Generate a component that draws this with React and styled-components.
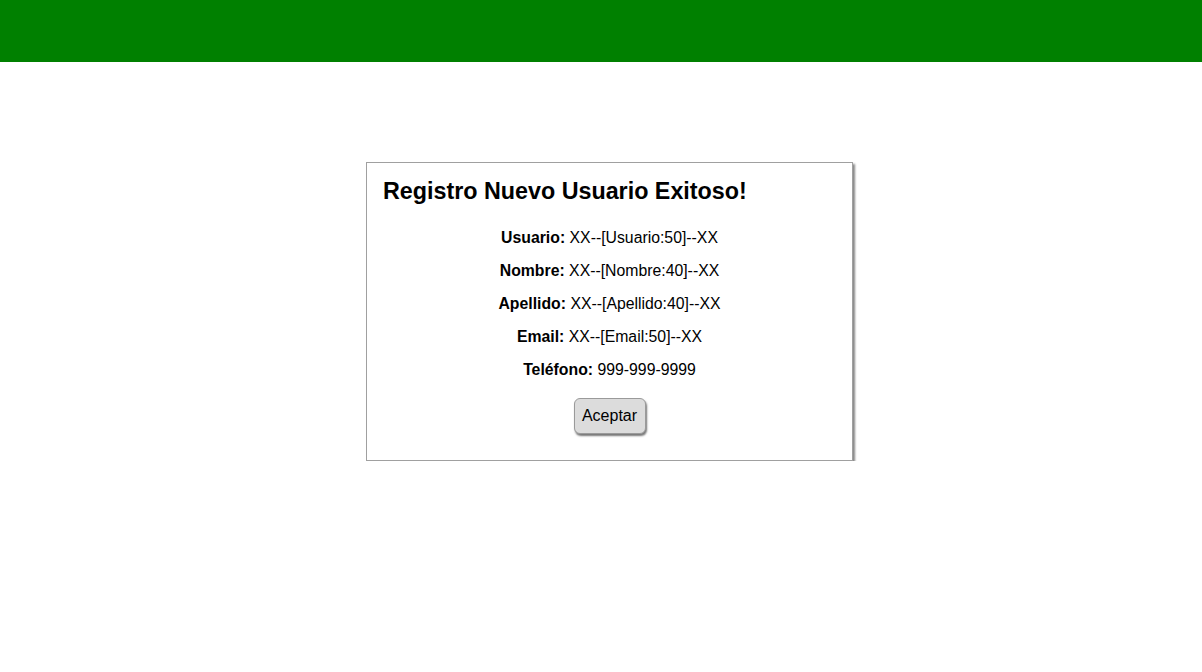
import styled, { createGlobalStyle } from 'styled-components';

const GlobalStyle = createGlobalStyle`
    body {
        margin: 0;
        background: #fff;
        font-family: 'Liberation Sans', Arial, sans-serif;
        color: #000;
    }
`

const Header = styled.header`
    height: 62px;
    background: #008000;
`

const Page = styled.main`
    display: flex;
    justify-content: center;
    padding: 100px 0 0 17px;
`

const Card = styled.section`
    width: 453px;
    padding: 16px 16px 26px;
    border: 1px solid #a0a0a0;
    box-shadow: 2px 2px 2px #888;
    background: #fff;
`

const Title = styled.h2`
    margin: 0 0 25px;
    font-size: 23.3px;
    line-height: 25px;
    font-weight: bold;
`

const Row = styled.p`
    margin: 15px 0 0;
    text-align: center;
    font-size: 15.8px;
    line-height: 18px;
    & b {
        font-weight: bold;
    }
`

const Actions = styled.div`
    display: flex;
    justify-content: center;
    margin-top: 19px;
`

const Button = styled.button`
    width: 72px;
    height: 36px;
    padding: 0;
    font-family: 'Liberation Sans', Arial, sans-serif;
    font-size: 16px;
    color: #000;
    background: #dcdcdc;
    border: 1px solid #9a9a9a;
    border-radius: 6px;
    box-shadow: 1px 2px 2px #777;
    cursor: pointer;
`

const fields = [
    ['Usuario', 'XX--[Usuario:50]--XX'],
    ['Nombre', 'XX--[Nombre:40]--XX'],
    ['Apellido', 'XX--[Apellido:40]--XX'],
    ['Email', 'XX--[Email:50]--XX'],
    ['Teléfono', '999-999-9999'],
]

const App = () => {
    return (
        <>
            <GlobalStyle />
            <Header />
            <Page>
                <Card>
                    <Title>Registro Nuevo Usuario Exitoso!</Title>
                    {fields.map(([label, value]) => (
                        <Row key={label}><b>{label}:</b> {value}</Row>
                    ))}
                    <Actions>
                        <Button>Aceptar</Button>
                    </Actions>
                </Card>
            </Page>
        </>
    )
}

export default App;
